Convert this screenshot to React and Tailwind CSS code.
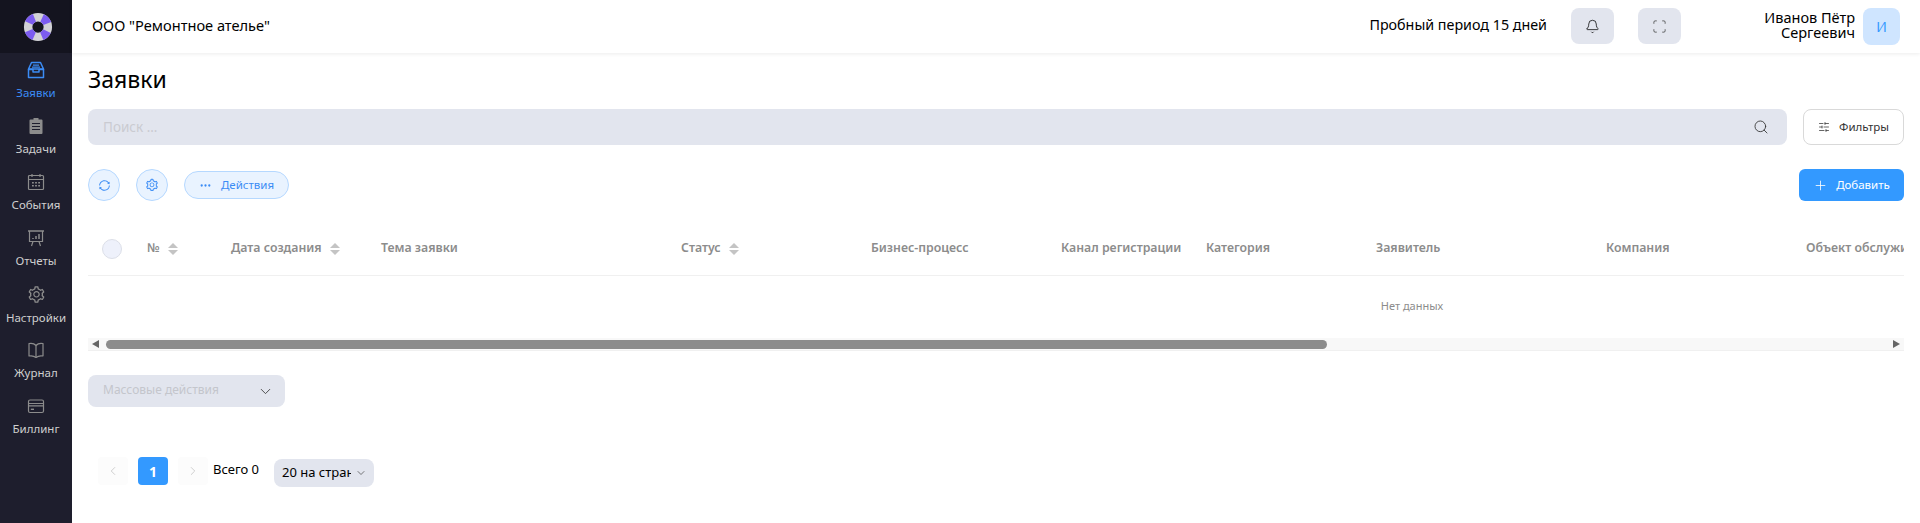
import React from 'react'
import { Bell, Scan, Search, SlidersHorizontal, Plus, Ellipsis, ChevronDown, ChevronLeft, ChevronRight } from 'lucide-react'
import { AiOutlineSetting, AiOutlineSync } from 'react-icons/ai'

const InboxIcon = () => (
  <svg width="18" height="18" viewBox="0 0 18 18" fill="none" stroke="currentColor" strokeWidth="1.500" strokeLinejoin="round">
    <path d="M4.500 1.500h9l3 6.500H1.500z" />
    <path d="M1.500 8v8.500h15V8" />
    <path d="M1.500 8.500h4.500v2.500h6V8.500h4.500" />
    <path d="M6 4.200h6M5 6.200h8" strokeWidth="1.200" />
  </svg>
)

const ClipboardIcon = () => (
  <svg width="18" height="18" viewBox="0 0 18 18" fill="currentColor">
    <path d="M6.500 1h5v1.500h3a1 1 0 0 1 1 1V16a1 1 0 0 1-1 1h-11a1 1 0 0 1-1-1V3.500a1 1 0 0 1 1-1h3z" />
    <path d="M5 6.500h8M5 9.500h8M5 12.500h8" stroke="#1e1e2d" strokeWidth="1.100" />
  </svg>
)

const CalendarIcon = () => (
  <svg width="18" height="18" viewBox="0 0 18 18" fill="none" stroke="currentColor" strokeWidth="1.200">
    <rect x="1.500" y="2.500" width="15" height="14" rx="1" />
    <path d="M1.500 6.500h15M5 1v3M13 1v3" />
    <path d="M5 9.800h1.800M8.100 9.800h1.800M11.200 9.800h1.800M5 12.800h1.800M8.100 12.800h1.800M11.200 12.800h1.800" strokeWidth="1.500" />
  </svg>
)

const ReportIcon = () => (
  <svg width="18" height="18" viewBox="0 0 18 18" fill="none" stroke="currentColor" strokeWidth="1.200">
    <path d="M1 2h16" strokeWidth="1.500" />
    <path d="M2.500 2v10.500h13V2" />
    <path d="M6 12.500L4.500 17M12 12.500l1.500 4.500" />
    <path d="M6 10V9M9 10V7M12 10V5" strokeWidth="1.500" />
  </svg>
)

const BookIcon = () => (
  <svg width="18" height="18" viewBox="0 0 18 18" fill="none" stroke="currentColor" strokeWidth="1.200" strokeLinejoin="round">
    <path d="M9 4.500C7.500 2.800 4.500 2 2 2.500v12.500c2.500-.5 5.500.3 7 1.500 1.500-1.200 4.500-2 7-1.500V2.500C13.500 2 10.500 2.800 9 4.500z" />
    <path d="M9 4.500v12" />
  </svg>
)

const CardIcon = () => (
  <svg width="18" height="18" viewBox="0 0 18 18" fill="none" stroke="currentColor" strokeWidth="1.200">
    <rect x="1.500" y="3" width="15" height="12.500" rx="1.500" />
    <path d="M1.500 6.500h15M1.500 8.800h15" />
    <path d="M3.800 12.300h3.200" strokeWidth="1.400" />
  </svg>
)

const sideItems = [
  { label: 'Заявки', icon: <InboxIcon />, active: true },
  { label: 'Задачи', icon: <ClipboardIcon /> },
  { label: 'События', icon: <CalendarIcon /> },
  { label: 'Отчеты', icon: <ReportIcon /> },
  { label: 'Настройки', icon: <AiOutlineSetting size={19} /> },
  { label: 'Журнал', icon: <BookIcon /> },
  { label: 'Биллинг', icon: <CardIcon /> },
]

const Sorter = () => (
  <span className="flex flex-col gap-[2px] ml-2">
    <span className="w-0 h-0 border-x-[5px] border-x-transparent border-b-[5px] border-b-[#c4c4c4]"></span>
    <span className="w-0 h-0 border-x-[5px] border-x-transparent border-t-[5px] border-t-[#c4c4c4]"></span>
  </span>
)

const columns = [
  { title: '№', sort: true },
  { title: 'Дата создания', sort: true },
  { title: 'Тема заявки' },
  { title: 'Статус', sort: true },
  { title: 'Бизнес-процесс' },
  { title: 'Канал регистрации' },
  { title: 'Категория' },
  { title: 'Заявитель' },
  { title: 'Компания' },
  { title: 'Объект обслуживания' },
]

const Logo = () => (
  <svg width="30" height="30" viewBox="0 0 32 32">
    <circle cx="16" cy="16" r="10.500" fill="none" stroke="#d2d2d6" strokeWidth="9" />
    <circle cx="16" cy="16" r="10.500" fill="none" stroke="#7c5cf0" strokeWidth="9" strokeDasharray="8.250 8.250" strokeDashoffset="4.120" transform="rotate(45 16 16)" />
  </svg>
)

const App = () => {
  return (
    <div className="flex w-full h-[523px] overflow-hidden bg-white text-black font-['Noto_Sans',sans-serif]">

      <div className="w-[72px] shrink-0 bg-[#1e1e2d] flex flex-col">
        <div className="h-[53px] bg-[#14141f] flex items-center justify-center pl-[3px]">
          <Logo />
        </div>
        {sideItems.map((obj) => (
          <div key={obj.label} className={`h-[56px] flex flex-col items-center pt-[8px] ${obj.active ? 'text-[#3b8cf5]' : 'text-[#8c8c8c]'}`}>
            {obj.icon}
            <div className={`text-[11.500px] leading-[16px] mt-[6px] ${obj.active ? 'text-[#3b8cf5]' : 'text-[#cfcfcf]'}`}>{obj.label}</div>
          </div>
        ))}
      </div>

      <div className="flex-1 min-w-0 flex flex-col">

        <div className="h-[53px] shrink-0 flex items-center pl-[20px] pr-[20px] pb-[1px] shadow-[0_1px_4px_rgba(0,0,0,0.08)]">
          <div className="text-[14.600px]">ООО "Ремонтное ателье"</div>
          <div className="ml-auto text-[14.300px] -mt-[2px]">Пробный период 15 дней</div>
          <button className="ml-[24px] w-[43px] h-[36px] rounded-lg bg-[#e2e5ee] flex items-center justify-center">
            <Bell size={15} strokeWidth={1.200} />
          </button>
          <button className="ml-[24px] w-[43px] h-[36px] rounded-lg bg-[#e2e5ee] flex items-center justify-center text-[#444]">
            <Scan size={15} strokeWidth={1.300} />
          </button>
          <div className="ml-[40px] w-[134px] text-right text-[14.500px] leading-[15px] -mt-[2px]">Иванов Пётр Сергеевич</div>
          <div className="ml-[8px] w-[37px] h-[37px] rounded-lg bg-[#cfe5ff] text-[#3399ff] flex items-center justify-center text-[14px]">И</div>
        </div>

        <div className="flex-1 min-w-0 px-[16px]">
          <div className="text-[23px] leading-[32px] mt-[10px]">Заявки</div>

          <div className="flex gap-[16px] mt-[14px]">
            <div className="flex-1 h-[36px] rounded-lg bg-[#e2e5ee] flex items-center justify-between pl-[15px] pr-[18px]">
              <span className="text-[13.500px] text-[#cacbd1]">Поиск ...</span>
              <Search size={16} strokeWidth={1.300} className="text-[#333]" />
            </div>
            <button className="w-[101px] h-[36px] rounded-lg border border-[#d9d9d9] flex items-center justify-center gap-[9px] text-[11.500px] text-[#333]">
              <SlidersHorizontal size={12} strokeWidth={1.500} />
              Фильтры
            </button>
          </div>

          <div className="flex items-center mt-[24px]">
            <button className="w-[32px] h-[32px] rounded-full border border-[#b5d8ff] bg-[#e9f3ff] text-[#3b8cf5] flex items-center justify-center">
              <AiOutlineSync size={13} />
            </button>
            <button className="ml-[16px] w-[32px] h-[32px] rounded-full border border-[#b5d8ff] bg-[#e9f3ff] text-[#3b8cf5] flex items-center justify-center">
              <AiOutlineSetting size={14} />
            </button>
            <button className="ml-[16px] w-[105px] h-[28px] rounded-full border border-[#b5d8ff] bg-[#e9f3ff] text-[#3b8cf5] flex items-center justify-center gap-[9px] text-[11.500px]">
              <Ellipsis size={13} strokeWidth={2.200} />
              Действия
            </button>
            <button className="ml-auto w-[105px] h-[32px] rounded-md bg-[#3399ff] text-white flex items-center justify-center gap-[8px] text-[11.500px]">
              <Plus size={15} strokeWidth={1.300} />
              Добавить
            </button>
          </div>

          <div className="mt-[20px] overflow-hidden">
            <div className="grid grid-cols-[47px_84px_150px_300px_190px_190px_145px_170px_230px_200px_942px] w-[2648px] h-[55px] pt-[1px] items-center border-b border-[#f0f0f0] text-[12.300px] font-semibold text-[#8c8c8c]">
              <div className="pl-[14px]">
                <div className="w-[20px] h-[20px] rounded-full border border-[#dcdfe8] bg-[#eef1fb]"></div>
              </div>
              {columns.map((obj) => (
                <div key={obj.title} className="flex items-center px-[12px] whitespace-nowrap">
                  {obj.title}
                  {obj.sort && <Sorter />}
                </div>
              ))}
            </div>
            <div className="w-[2648px] h-[62px] pb-[2px] flex items-center justify-center text-[11px] text-[#8c8c8c]">Нет данных</div>
            <div className="h-[13px] bg-[#f8f8f8] border-b border-[#f0f0f0] flex items-center">
              <span className="ml-[4px] w-0 h-0 border-y-[4px] border-y-transparent border-r-[7px] border-r-[#666]"></span>
              <div className="ml-[7px] w-[1221px] h-[9px] rounded-full bg-[#8c8c8c]"></div>
              <span className="ml-auto mr-[4px] w-0 h-0 border-y-[4px] border-y-transparent border-l-[7px] border-l-[#666]"></span>
            </div>
          </div>

          <div className="mt-[24px] w-[197px] h-[32px] rounded-lg bg-[#e2e5ee] flex items-center justify-between pl-[15px] pr-[11px]">
            <span className="text-[12px] text-[#c4c6cc] -mt-[2px]">Массовые действия</span>
            <ChevronDown size={17} strokeWidth={1.300} className="text-[#444]" />
          </div>

          <div className="flex items-start mt-[50px] pl-[10px]">
            <div className="w-[30px] h-[28px] rounded bg-[#fcfcfc] flex items-center justify-center text-[#c8c8c8]">
              <ChevronLeft size={14} strokeWidth={1.500} />
            </div>
            <div className="ml-[10px] w-[30px] h-[28px] rounded-sm bg-[#3399ff] text-white font-bold text-[14px] flex items-center justify-center">1</div>
            <div className="ml-[10px] w-[30px] h-[28px] rounded bg-[#fcfcfc] flex items-center justify-center text-[#c8c8c8]">
              <ChevronRight size={14} strokeWidth={1.500} />
            </div>
            <div className="ml-[5px] text-[13px] leading-[24px]">Всего 0</div>
            <div className="ml-[15px] mt-[2px] w-[100px] h-[28px] rounded-lg bg-[#e2e5ee] flex items-center pl-[8px] pr-[7px] text-[13px]">
              <span className="w-[69px] overflow-hidden whitespace-nowrap">20 на странице</span>
              <ChevronDown size={12} strokeWidth={1.400} className="ml-auto text-[#444]" />
            </div>
          </div>
        </div>
      </div>
    </div>
  )
}

export default App
